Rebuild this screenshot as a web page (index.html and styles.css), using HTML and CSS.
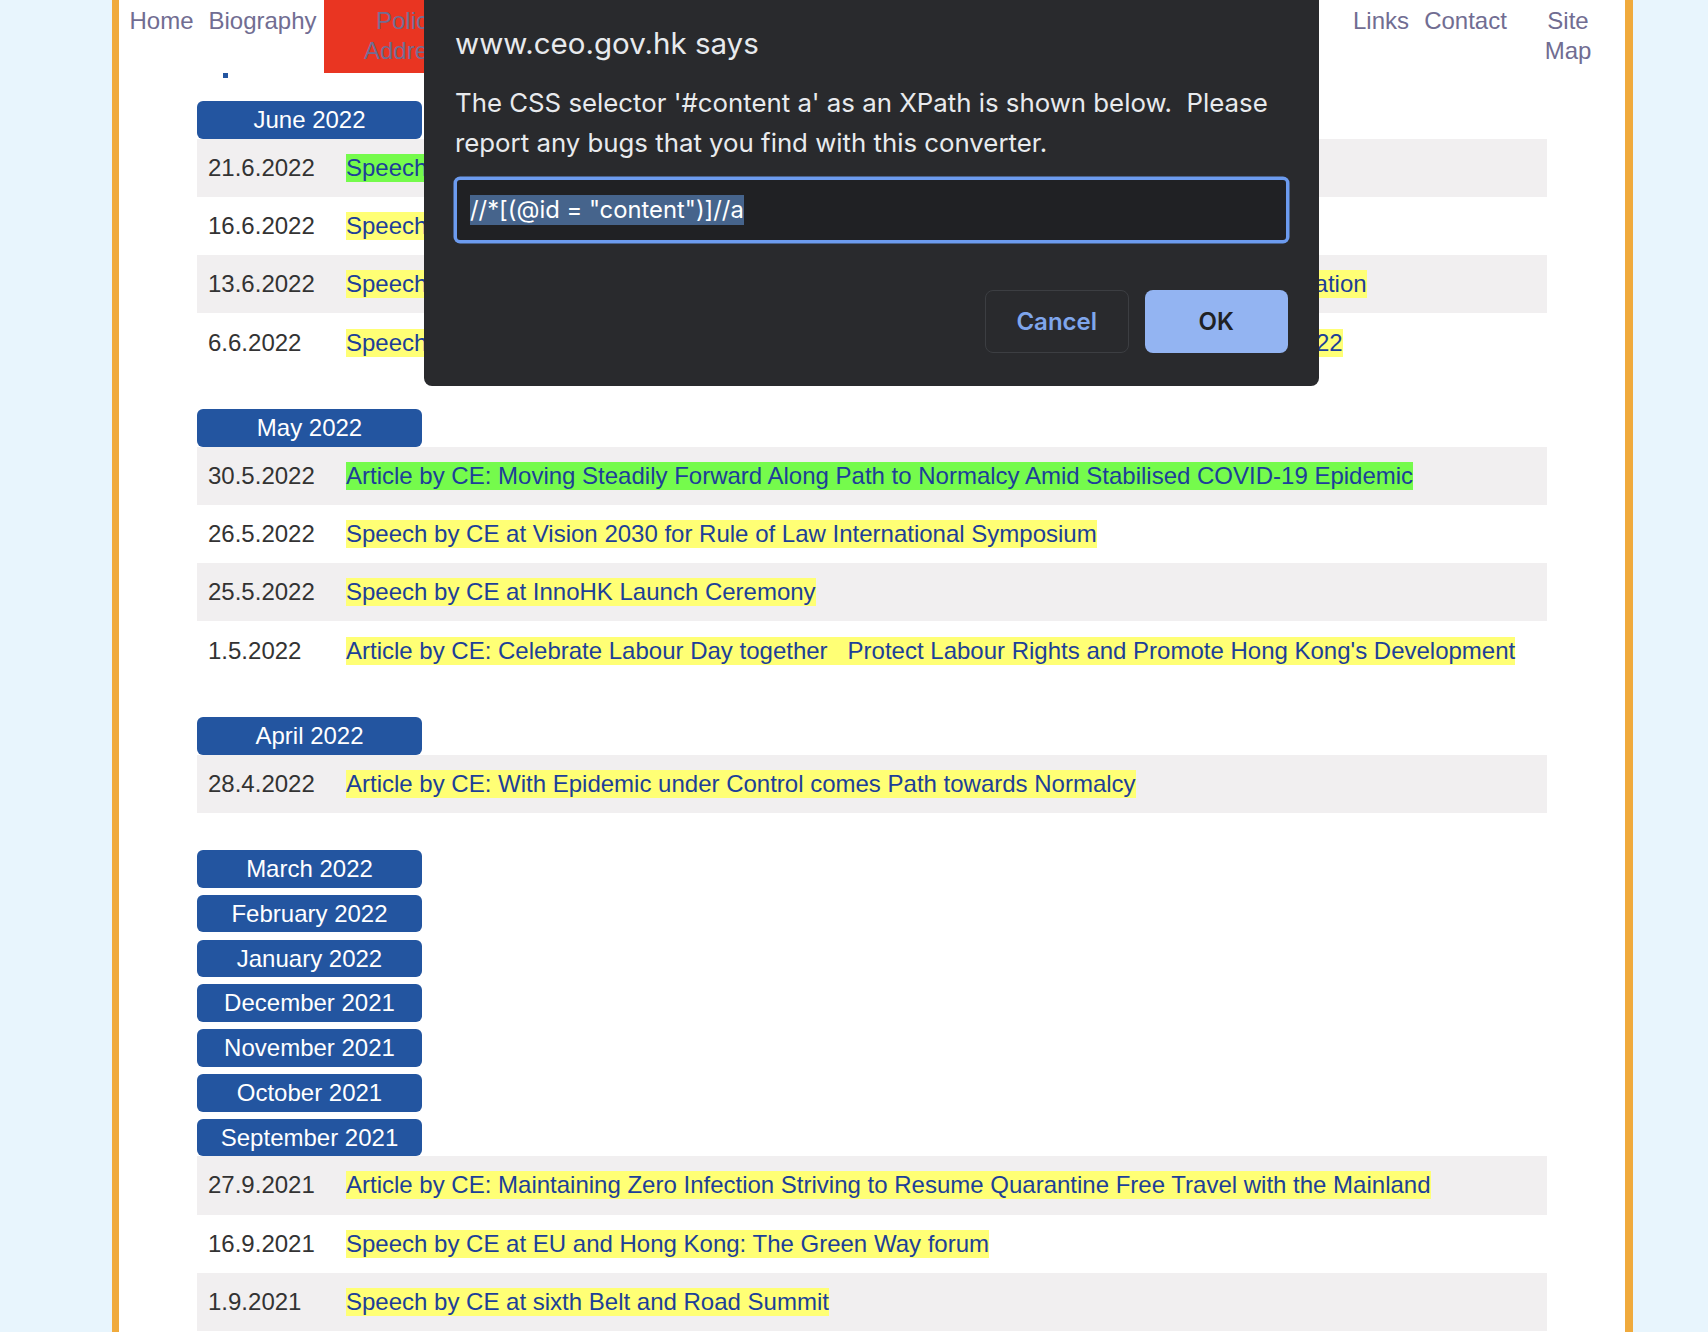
FILE: index.html
```html
<!DOCTYPE html>
<html lang="en">
<head>
<meta charset="utf-8">
<title>Speeches and Articles - Chief Executive</title>
<link rel="stylesheet" href="styles.css">
</head>
<body>
<div class="page">
  <nav class="topnav">
    <a class="nav-item nav-home" href="#">Home</a>
    <a class="nav-item nav-bio" href="#">Biography</a>
    <a class="nav-item nav-policy" href="#">Policy Address</a>
    <a class="nav-item nav-hidden" href="#">Speeches</a>
    <a class="nav-item nav-hidden" href="#">Press Releases</a>
    <a class="nav-item nav-hidden" href="#">Photos</a>
    <a class="nav-item nav-hidden" href="#">Videos</a>
    <a class="nav-item nav-links" href="#">Links</a>
    <a class="nav-item nav-contact" href="#">Contact</a>
    <a class="nav-item nav-sitemap" href="#">Site Map</a>
  </nav>
  <div class="crumb"><span class="dot"></span></div>

  <main id="content" class="archive">
    <section class="month">
      <h2 class="month-head">June 2022</h2>
      <div class="row odd"><span class="date">21.6.2022</span><a class="title hl-green" href="#">Speech by CE at Hong Kong Jockey Club Charity Celebration Dinner</a></div>
      <div class="row"><span class="date">16.6.2022</span><a class="title" href="#">Speech by CE at Legislative Council Question and Answer Session</a></div>
      <div class="row odd"><span class="date">13.6.2022</span><a class="title" href="#">Speech by CE at the Hong Kong Institute of Chartered Secretaries 70th Anniversary Celebration</a></div>
      <div class="row"><span class="date">6.6.2022</span><a class="title" href="#">Speech by CE at Opening Ceremony of International Conference on Rural Development 2022</a></div>
    </section>

    <section class="month">
      <h2 class="month-head">May 2022</h2>
      <div class="row odd"><span class="date">30.5.2022</span><a class="title hl-green" href="#">Article by CE: Moving Steadily Forward Along Path to Normalcy Amid Stabilised COVID-19 Epidemic</a></div>
      <div class="row"><span class="date">26.5.2022</span><a class="title" href="#">Speech by CE at Vision 2030 for Rule of Law International Symposium</a></div>
      <div class="row odd"><span class="date">25.5.2022</span><a class="title" href="#">Speech by CE at InnoHK Launch Ceremony</a></div>
      <div class="row"><span class="date">1.5.2022</span><a class="title" href="#">Article by CE: Celebrate Labour Day together &nbsp; Protect Labour Rights and Promote Hong Kong's Development</a></div>
    </section>

    <section class="month">
      <h2 class="month-head">April 2022</h2>
      <div class="row odd"><span class="date">28.4.2022</span><a class="title" href="#">Article by CE: With Epidemic under Control comes Path towards Normalcy</a></div>
    </section>

    <section class="month empty"><h2 class="month-head">March 2022</h2></section>
    <section class="month empty"><h2 class="month-head">February 2022</h2></section>
    <section class="month empty"><h2 class="month-head">January 2022</h2></section>
    <section class="month empty"><h2 class="month-head">December 2021</h2></section>
    <section class="month empty"><h2 class="month-head">November 2021</h2></section>
    <section class="month empty"><h2 class="month-head">October 2021</h2></section>

    <section class="month">
      <h2 class="month-head">September 2021</h2>
      <div class="row odd"><span class="date">27.9.2021</span><a class="title" href="#">Article by CE: Maintaining Zero Infection Striving to Resume Quarantine Free Travel with the Mainland</a></div>
      <div class="row"><span class="date">16.9.2021</span><a class="title" href="#">Speech by CE at EU and Hong Kong: The Green Way forum</a></div>
      <div class="row odd"><span class="date">1.9.2021</span><a class="title" href="#">Speech by CE at sixth Belt and Road Summit</a></div>
    </section>
  </main>
</div>

<div class="dialog" role="dialog">
  <h1 class="dialog-title">www.ceo.gov.hk says</h1>
  <p class="dialog-msg">The CSS selector '#content a' as an XPath is shown below.  Please report any bugs that you find with this converter.</p>
  <div class="dialog-input"><span class="sel">//*[(@id = "content")]//a</span></div>
  <div class="dialog-actions">
    <button class="btn btn-cancel" type="button">Cancel</button>
    <button class="btn btn-ok" type="button">OK</button>
  </div>
</div>
</body>
</html>
```

FILE: styles.css
```css
html { overflow: hidden; }
body {
  margin: 0;
  background: #e8f5fd;
  font-family: "Liberation Sans", Arial, sans-serif;
}

.page {
  margin-left: 112px;
  width: 1506px;
  min-height: 1332px;
  background: #fff;
  border-left: 7px solid #f0aa3c;
  border-right: 8px solid #f0aa3c;
}

/* top navigation */
.topnav {
  display: flex;
  align-items: flex-start;
  padding-left: 3px;
  height: 73px;
}
.nav-item {
  box-sizing: border-box;
  text-align: center;
  color: #716d92;
  text-decoration: none;
  font-size: 24px;
  line-height: 30px;
  padding-top: 6px;
}
.nav-home { width: 79px; }
.nav-bio { width: 123px; }
.nav-policy {
  width: 168px;
  height: 73px;
  padding: 6px 35px 0;
  background: #e93522;
}
.nav-hidden { width: 213.5px; }
.nav-links { width: 70px; }
.nav-contact { width: 99px; }
.nav-sitemap { width: 106px; padding: 6px 10px 0; }

.crumb { height: 28px; }
.dot {
  display: block;
  width: 5px;
  height: 5px;
  margin-left: 104px;
  background: #2355a0;
}

/* archive list */
.archive {
  margin-left: 78px;
  width: 1350px;
}
.month { margin-bottom: 37.2px; }
.month.empty { margin-bottom: 7.2px; }
.month-head {
  margin: 0;
  width: 225px;
  height: 37.6px;
  line-height: 37.6px;
  border-radius: 6px;
  background: #2355a0;
  color: #fff;
  font-size: 24px;
  font-weight: normal;
  text-align: center;
}
.row {
  display: flex;
  align-items: center;
  height: 58.3px;
  font-size: 24px;
}
.row.odd { background: #f1eff0; }
.date {
  box-sizing: border-box;
  flex: 0 0 149px;
  padding-left: 11px;
  color: #333;
}
.title {
  color: #1d3f98;
  text-decoration: none;
  background: #ffff75;
  white-space: nowrap;
}
.title.hl-green { background: #75fb4c; }

/* alert dialog */
.dialog {
  position: fixed;
  left: 424px;
  top: -10px;
  width: 895px;
  box-sizing: border-box;
  padding: 34.6px 31px 32.4px 31px;
  background: #292a2d;
  border-radius: 8px;
  color: #e8eaed;
  font-family: Inter, "Noto Sans", sans-serif;
}
.dialog-title {
  margin: 0;
  font-size: 29.5px;
  line-height: 36px;
  font-weight: normal;
}
.dialog-msg {
  margin: 22.75px 0 0;
  font-size: 25.8px;
  line-height: 39.5px;
  white-space: pre-wrap;
}
.dialog-input {
  box-sizing: border-box;
  margin-top: 15.6px;
  height: 64px;
  padding: 0 13px;
  display: flex;
  align-items: center;
  background: #202124;
  border: 2px solid #6c9bef;
  box-shadow: 0 0 0 1.5px #6c9bef;
  border-radius: 5px;
  font-size: 23.8px;
  color: #fff;
}
.sel {
  background: #46648c;
  line-height: 30px;
}
.dialog-actions {
  margin-top: 48px;
  display: flex;
  justify-content: flex-end;
  gap: 16px;
}
.btn {
  box-sizing: border-box;
  width: 143.5px;
  height: 63.3px;
  border-radius: 8px;
  font-family: Inter, "Noto Sans", sans-serif;
  font-size: 24px;
  font-weight: 600;
}
.btn-cancel {
  background: transparent;
  border: 1px solid #3c3e42;
  color: #7fa6ec;
}
.btn-ok {
  background: #93b4f2;
  border: none;
  color: #202124;
}
```
